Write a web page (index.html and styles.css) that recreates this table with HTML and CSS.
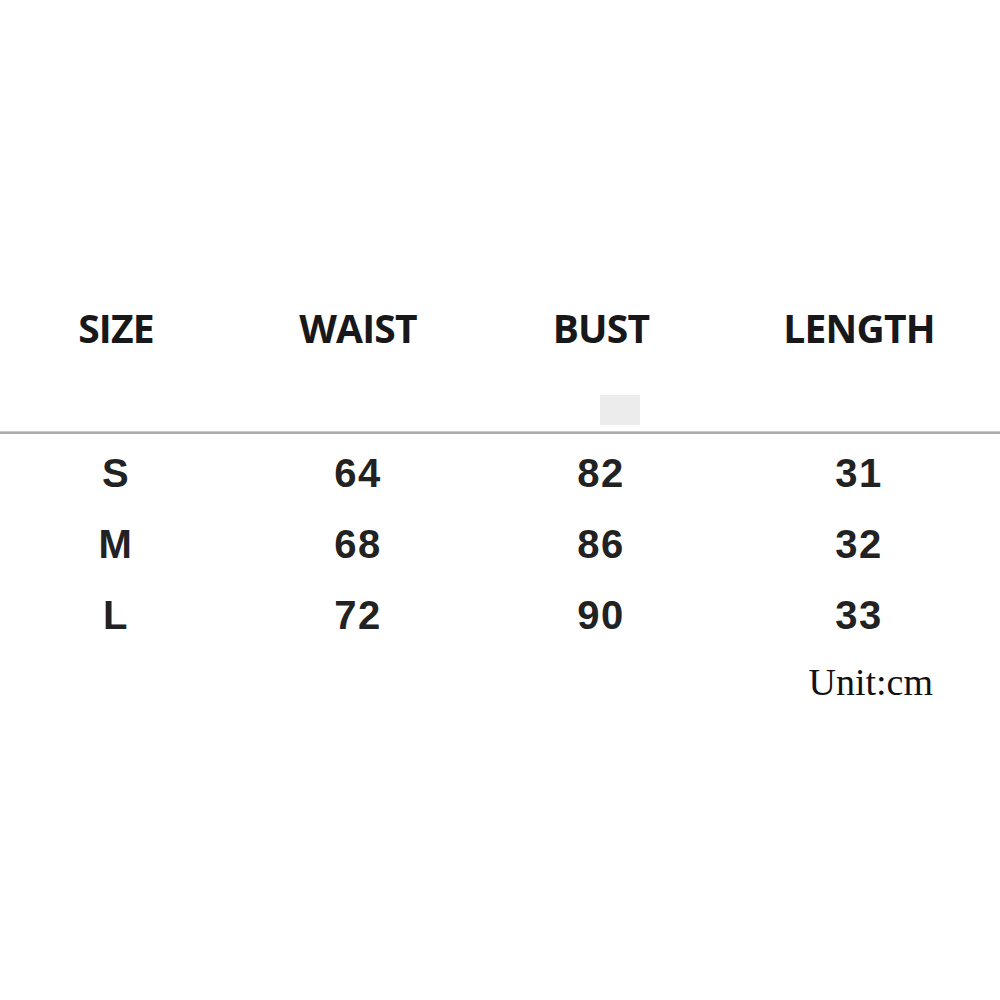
FILE: index.html
```html
<!DOCTYPE html>
<html lang="en">
<head>
<meta charset="utf-8">
<title>Size chart</title>
<link rel="stylesheet" href="styles.css">
</head>
<body>
<main class="chart">
  <div class="row head">
    <div class="cell">SIZE</div>
    <div class="cell">WAIST</div>
    <div class="cell">BUST</div>
    <div class="cell">LENGTH</div>
  </div>
  <div class="spacer"><span class="smudge"></span></div>
  <div class="rule"></div>
  <div class="row data">
    <div class="cell">S</div>
    <div class="cell">64</div>
    <div class="cell">82</div>
    <div class="cell">31</div>
  </div>
  <div class="row data">
    <div class="cell">M</div>
    <div class="cell">68</div>
    <div class="cell">86</div>
    <div class="cell">32</div>
  </div>
  <div class="row data">
    <div class="cell">L</div>
    <div class="cell">72</div>
    <div class="cell">90</div>
    <div class="cell">33</div>
  </div>
  <div class="unit">Unit:cm</div>
</main>
</body>
</html>
```

FILE: styles.css
```css
html, body {
  margin: 0;
  padding: 0;
  background: #ffffff;
}

.chart {
  width: 1000px;
  padding-top: 304px;
  display: flex;
  flex-direction: column;
}

.row {
  display: grid;
  grid-template-columns: 232px 252px 234px 282px;
}

.cell {
  text-align: center;
  white-space: nowrap;
}

.head {
  height: 48px;
  line-height: 48px;
  font-family: "Open Sans", "Liberation Sans", sans-serif;
  font-weight: 700;
  font-size: 39px;
  letter-spacing: -0.8px;
  color: #18181a;
}

.spacer {
  height: 79px;
  display: flex;
}

.smudge {
  display: block;
  width: 40px;
  height: 30px;
  margin-top: 43px;
  margin-left: 600px;
  background: #ececec;
}

.rule {
  height: 3px;
  background: #acacac;
  border-top: 1px solid #c8c8c8;
  box-sizing: border-box;
  margin-bottom: 4px;
}

.data {
  height: 71px;
  line-height: 71px;
  font-family: "Liberation Sans", Arial, sans-serif;
  font-weight: 700;
  font-size: 40px;
  letter-spacing: 1.5px;
  color: #222222;
}

.unit {
  margin-top: 9px;
  align-self: flex-end;
  padding-right: 67px;
  line-height: 44px;
  font-family: "Liberation Serif", "Times New Roman", serif;
  font-size: 38px;
  color: #111111;
}
```
